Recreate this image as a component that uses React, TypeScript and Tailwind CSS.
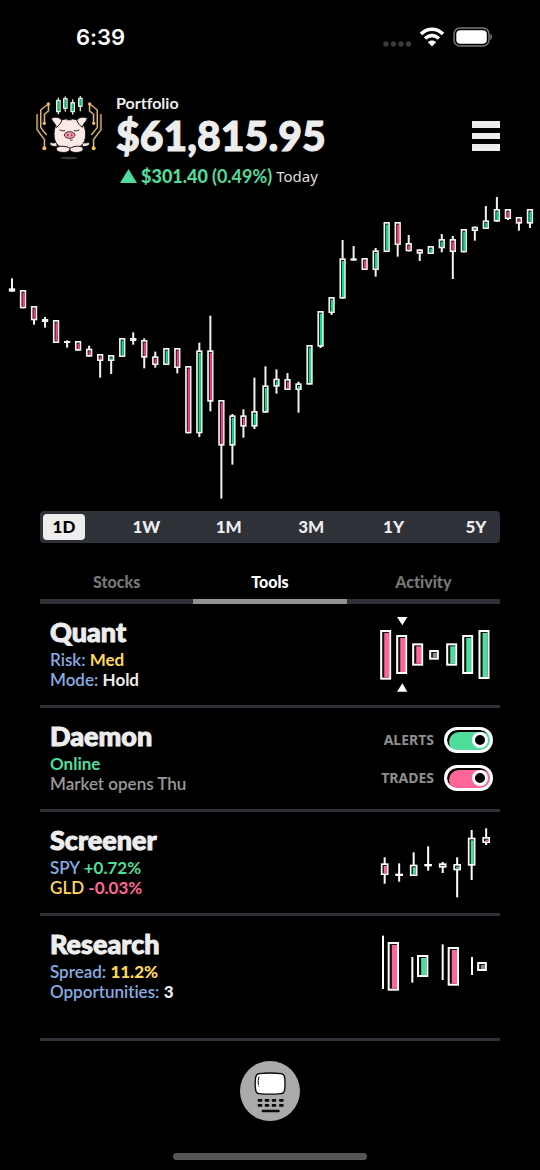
import { useState } from "react";
import clsx from "clsx";

type Tone = "up" | "down" | "flat";
// high, body top, body bottom, low, tone
type CandleData = [number, number, number, number, Tone];

const fills = {
  up: "#00e387",
  down: "#ff3b78",
  flat: "#d8d8d8",
};

const softFills = {
  up: "#50dc9a",
  down: "#ff6596",
  flat: "#8f8f8f",
};

const dayCandles: CandleData[] = [
  [265, 295, 305, 305, "flat"],
  [300, 300, 355, 355, "down"],
  [348, 348, 391, 404, "down"],
  [381, 387, 396, 413, "flat"],
  [390, 390, 459, 459, "down"],
  [451, 453, 459, 473, "down"],
  [453, 453, 482, 482, "down"],
  [467, 476, 500, 500, "down"],
  [492, 492, 513, 563, "down"],
  [495, 495, 513, 552, "up"],
  [444, 444, 501, 501, "up"],
  [427, 444, 453, 464, "flat"],
  [445, 450, 503, 535, "down"],
  [485, 499, 525, 533, "down"],
  [474, 474, 525, 525, "up"],
  [474, 474, 534, 550, "down"],
  [528, 528, 730, 730, "down"],
  [458, 481, 730, 741, "up"],
  [377, 481, 635, 664, "down"],
  [630, 630, 767, 926, "down"],
  [672, 676, 767, 824, "up"],
  [658, 676, 710, 743, "down"],
  [563, 663, 710, 717, "up"],
  [529, 586, 668, 668, "up"],
  [538, 566, 590, 611, "up"],
  [549, 567, 600, 600, "down"],
  [575, 580, 600, 668, "up"],
  [465, 465, 584, 584, "up"],
  [363, 363, 470, 474, "up"],
  [321, 321, 369, 375, "up"],
  [150, 205, 326, 326, "up"],
  [168, 205, 212, 212, "down"],
  [204, 204, 240, 240, "down"],
  [174, 181, 240, 260, "up"],
  [96, 96, 186, 186, "up"],
  [96, 96, 165, 200, "down"],
  [135, 159, 184, 184, "down"],
  [178, 178, 191, 213, "down"],
  [168, 168, 192, 192, "up"],
  [132, 147, 175, 187, "up"],
  [138, 147, 186, 267, "down"],
  [117, 117, 187, 187, "up"],
  [110, 110, 123, 152, "up"],
  [48, 91, 117, 117, "up"],
  [21, 57, 95, 95, "up"],
  [57, 57, 87, 90, "down"],
  [81, 81, 101, 122, "down"],
  [57, 57, 101, 114, "up"],
];

const screenerCandles: CandleData[] = [
  [127, 145, 180, 206, "down"],
  [145, 176, 183, 200, "down"],
  [112, 149, 183, 183, "up"],
  [94, 147, 154, 167, "flat"],
  [141, 145, 158, 174, "flat"],
  [127, 147, 166, 247, "up"],
  [45, 68, 152, 195, "up"],
  [40, 66, 84, 90, "down"],
];

interface BarProps {
  x: number;
  top: number;
  bottom: number;
  width: number;
  stroke: number;
  fill: string;
  line?: string;
}

function Bar({ x, top, bottom, width, stroke, fill, line = "#fff" }: BarProps) {
  const inner = width - stroke * 2;
  const innerHeight = Math.max(bottom - top - stroke * 2, 0);
  const shade = inner * 0.3;
  return (
    <g>
      <rect x={x - width / 2} y={top} width={width} height={bottom - top} fill={line} />
      <rect x={x - inner / 2} y={top + stroke} width={inner} height={innerHeight} fill="#111" />
      <rect
        x={x - inner / 2 + shade}
        y={top + stroke + Math.min(3, innerHeight / 3)}
        width={inner - shade}
        height={Math.max(innerHeight - Math.min(3, innerHeight / 3), 0)}
        fill={fill}
      />
    </g>
  );
}

function PortfolioChart() {
  return (
    <svg viewBox="0 0 1620 930" className="block w-full" role="img" aria-label="Portfolio chart">
      {dayCandles.map(([high, top, bottom, low, tone], i) => {
        const x = 36 + i * 33.06;
        return (
          <g key={i}>
            <rect x={x - 3} y={high} width={6} height={low - high} fill="#f2f2f2" />
            <Bar x={x} top={top} bottom={bottom} width={19} stroke={5} fill={fills[tone]} line="#f2f2f2" />
          </g>
        );
      })}
    </svg>
  );
}

function QuantChart() {
  const bars: [number, number, number, Tone][] = [
    [77, 75, 224, "down"],
    [125, 90, 207, "down"],
    [173, 115, 182, "down"],
    [222, 135, 164, "flat"],
    [275, 115, 182, "up"],
    [323, 90, 207, "up"],
    [372, 75, 222, "up"],
  ];
  return (
    <svg viewBox="45 21 360 252" width="120" height="84" aria-hidden="true">
      <path d="M111 36H142L127 61Z M111 260H142L127 235Z" fill="#fff" />
      {bars.map(([x, top, bottom, tone]) => (
        <Bar
          key={x}
          x={x}
          top={top}
          bottom={bottom}
          width={tone === "flat" ? 29 : 33}
          stroke={6}
          fill={softFills[tone]}
        />
      ))}
    </svg>
  );
}

function ScreenerChart() {
  return (
    <svg viewBox="45 30 360 228" width="120" height="76" aria-hidden="true">
      {screenerCandles.map(([high, top, bottom, low, tone], i) => {
        const x = 74 + i * 43.5;
        return (
          <g key={i}>
            <rect x={x - 3} y={high} width={6} height={low - high} fill="#fff" />
            <Bar x={x} top={top} bottom={bottom} width={23} stroke={5} fill={softFills[tone]} />
          </g>
        );
      })}
    </svg>
  );
}

function ResearchChart() {
  const pairs: [number, number, number, number, number, number, Tone][] = [
    [69, 362, 522, 100, 381, 527, "down"],
    [157, 426, 503, 188, 420, 486, "up"],
    [248, 388, 495, 280, 396, 512, "down"],
    [336, 426, 480, 366, 441, 468, "flat"],
  ];
  return (
    <svg viewBox="45 351 360 186" width="120" height="62" aria-hidden="true">
      {pairs.map(([lineX, high, low, x, top, bottom, tone]) => (
        <g key={lineX}>
          <rect x={lineX - 3} y={high} width={6} height={low - high} fill="#fff" />
          <Bar
            x={x}
            top={top}
            bottom={bottom}
            width={tone === "flat" ? 29 : 34}
            stroke={6}
            fill={softFills[tone]}
          />
        </g>
      ))}
    </svg>
  );
}

function Circuit() {
  return (
    <g fill="none" strokeLinejoin="round">
      <path
        d="M88 59V80L77 89V112 M65 72V129L79 147 M54 88V134L76 162V190"
        stroke="#26306b"
        strokeWidth="3"
      />
      <path
        d="M85 57V78L73 88V114 M85 57L73 66L62 75V128L80 150 M51 87V134L73 164V190"
        stroke="#e3b75b"
        strokeWidth="4"
      />
      <g fill="#f0c060">
        <circle cx="85" cy="57" r="5" />
        <circle cx="73" cy="115" r="5" />
        <circle cx="73" cy="190" r="6" />
      </g>
    </g>
  );
}

function PigLogo() {
  return (
    <svg viewBox="45 27 204 204" width="68" height="68" role="img" aria-label="Pig logo">
      <Circuit />
      <g transform="translate(294 0) scale(-1 1)">
        <Circuit />
      </g>
      {[
        [115, 38, 44, 82, 88],
        [136, 34, 39, 72, 80],
        [158, 43, 51, 82, 89],
        [181, 33, 38, 66, 79],
      ].map(([x, high, top, bottom, low]) => (
        <g key={x}>
          <rect x={x - 2} y={high} width={4} height={low - high} fill="#ddd" />
          <rect x={x - 7} y={top} width={14} height={bottom - top} rx={2} fill="#e6f5ec" />
          <rect x={x - 3} y={top + 4} width={7} height={bottom - top - 8} fill="#12b573" />
        </g>
      ))}
      <g fill="#fde8e8" stroke="#151515" strokeWidth="3" strokeLinejoin="round">
        <path d="M110 170C100 178 94 170 90 174C87 180 96 186 112 184Z" />
        <path d="M188 170C198 178 204 170 208 174C211 180 202 186 186 184Z" />
        <path d="M147 101C117 101 102 119 102 147C102 178 119 192 149 192C181 192 197 177 197 147C197 119 181 101 147 101Z" />
        <path d="M94 100C105 93 121 97 125 106C123 115 118 120 109 127C107 115 98 113 94 100Z" />
        <path d="M202 100C191 93 175 97 171 106C173 115 178 120 187 127C189 115 198 113 202 100Z" />
        <path d="M110 188C117 181 140 183 151 190C149 203 132 204 119 201C112 199 107 194 110 188Z" />
        <path d="M188 188C180 181 162 183 149 190C148 203 168 204 179 201C187 199 192 194 188 188Z" />
      </g>
      <rect x="140" y="101" width="15" height="5" rx="2" fill="#111" />
      <path
        d="M120 135Q127 140 134 137 M163 137Q170 140 177 135 M151 165Q154 167 157 165"
        fill="none"
        stroke="#33272b"
        strokeWidth="3"
        strokeLinecap="round"
      />
      <ellipse cx="149" cy="150" rx="16" ry="10" fill="#f797ad" stroke="#492832" strokeWidth="3" />
      <ellipse cx="143" cy="150" rx="2.5" ry="4" fill="#963e5a" />
      <ellipse cx="155" cy="150" rx="2.5" ry="4" fill="#963e5a" />
      <ellipse cx="147" cy="219" rx="26" ry="4" fill="#30343a" />
    </svg>
  );
}

function StatusBar() {
  return (
    <div className="flex h-[74px] items-center justify-between pr-12 pl-[76px]">
      <span className="font-['Inter',sans-serif] text-[22px] font-semibold text-white">6:39</span>
      <svg width="110" height="24" viewBox="382 24 110 24" aria-hidden="true">
        <g fill="#3c3c3c">
          <circle cx="386" cy="43" r="2.7" />
          <circle cx="393.5" cy="43" r="2.7" />
          <circle cx="401" cy="43" r="2.7" />
          <circle cx="408.5" cy="43" r="2.7" />
        </g>
        <g fill="none" stroke="#fff" strokeWidth="3.5">
          <path d="M421 33C427.5 26.5 436.5 26.5 443 33" />
          <path d="M425 37.5C429.5 33.5 434.5 33.5 439 37.5" />
        </g>
        <path d="M432 45.5L427.7 41.1C430.2 38.9 433.8 38.9 436.3 41.1Z" fill="#fff" />
        <rect x="454" y="27" width="35" height="18" rx="6" fill="none" stroke="#777" strokeWidth="1.5" />
        <rect x="456.3" y="29.3" width="30.5" height="13.5" rx="4" fill="#fff" />
        <path d="M490.3 33C492.6 34 492.6 38 490.3 39Z" fill="#777" />
      </svg>
    </div>
  );
}

interface ToggleProps {
  id: string;
  label: string;
  color: string;
}

function Toggle({ id, label, color }: ToggleProps) {
  return (
    <div className="flex items-center justify-end gap-[10px]">
      <label htmlFor={id} className="font-['Noto_Sans',sans-serif] text-[14px] leading-5 font-bold text-[#8e8e8e]">
        {label}
      </label>
      <input
        id={id}
        type="checkbox"
        defaultChecked
        className={clsx(
          "flex h-[26px] w-[49px] cursor-pointer appearance-none items-center rounded-full border-3 border-white px-[2px] shadow-[inset_2px_2px_0_#000] after:size-4 after:rounded-full after:border-3 after:border-white after:bg-black checked:justify-end",
          color
        )}
      />
    </div>
  );
}

interface ToolRowProps {
  title: string;
  children: React.ReactNode;
  aside: React.ReactNode;
  last?: boolean;
}

function ToolRow({ title, children, aside, last }: ToolRowProps) {
  return (
    <section
      className={clsx(
        "flex items-start justify-between border-b-3 border-[#2e3138] pr-[5px] pl-[10px]",
        last ? "h-[125px]" : "h-[104px]"
      )}
    >
      <div className="pt-[14px] text-[17px] leading-5 font-semibold">
        <h2 className="mb-1 text-[27px] leading-7 font-black text-[#ededed] [-webkit-text-stroke:1px_currentColor]">
          {title}
        </h2>
        {children}
      </div>
      {aside}
    </section>
  );
}

const ranges = ["1D", "1W", "1M", "3M", "1Y", "5Y"];
const tabs = ["Stocks", "Tools", "Activity"];

export default function App() {
  const [range, setRange] = useState("1D");
  const [tab, setTab] = useState("Tools");

  return (
    <div className="min-h-screen bg-black font-['Lato',sans-serif] text-[#ededed] [font-variant-ligatures:none]">
      <StatusBar />
      <header className="flex h-[116px] items-start pt-5 pr-10 pl-[35px]">
        <PigLogo />
        <div className="ml-[13px] flex-1">
          <p className="text-[16px] leading-[18px] font-bold">Portfolio</p>
          <h1 className="text-[41px] leading-12 font-black [-webkit-text-stroke:1px_currentColor]">$61,815.95</h1>
          <p className="flex items-center gap-1 pl-1 text-[18px] leading-8 text-[#50dc9a]">
            <svg width="17" height="14" viewBox="0 0 17 14" aria-hidden="true">
              <path d="M8.5 0L17 14H0Z" fill="#50dc9a" />
            </svg>
            <span className="font-black">$301.40</span>
            <span className="font-bold">(0.49%)</span>
            <span className="font-['Noto_Sans',sans-serif] text-[15px] text-[#dedede]">Today</span>
          </p>
        </div>
        <button aria-label="Menu" className="mt-[27px] cursor-pointer">
          <svg width="28" height="30" viewBox="0 0 28 30" className="block">
            <path d="M0 0H28V7H0Z M0 12H28V18H0Z M0 23H28V30H0Z" fill="#ededed" />
          </svg>
        </button>
      </header>

      <PortfolioChart />

      <main className="mx-10">
        <div className="mt-[11px] flex justify-between rounded bg-[#2e3138] p-[3px]">
          {ranges.map((item) => (
            <button
              key={item}
              onClick={() => setRange(item)}
              className={clsx(
                "h-[26px] w-[42px] cursor-pointer rounded text-[17px] leading-[26px] font-black",
                item === range ? "bg-[#ededed] text-black" : "text-[#ededed]"
              )}
            >
              {item}
            </button>
          ))}
        </div>

        <nav className="mt-[27px] grid grid-cols-3">
          {tabs.map((item) => (
            <button
              key={item}
              onClick={() => setTab(item)}
              className={clsx(
                "cursor-pointer border-b-5 pb-[5px] text-[16px] leading-6 font-black",
                item === tab ? "border-[#929292] text-white" : "border-[#2e3138] text-[#777]"
              )}
            >
              {item}
            </button>
          ))}
        </nav>

        <ToolRow title="Quant" aside={<div className="pt-2"><QuantChart /></div>}>
          <p className="text-[#86ace0]">
            Risk: <span className="font-bold text-[#ffd65c]">Med</span>
          </p>
          <p className="text-[#86ace0]">
            Mode: <span className="font-bold text-[#ededed]">Hold</span>
          </p>
        </ToolRow>

        <ToolRow
          title="Daemon"
          aside={
            <div className="flex flex-col gap-3 pt-[19px] pr-[2px]">
              <Toggle id="alerts" label="ALERTS" color="bg-[#50dc9a]" />
              <Toggle id="trades" label="TRADES" color="bg-[#ff6596]" />
            </div>
          }
        >
          <p className="font-bold text-[#50dc9a]">Online</p>
          <p className="text-[#999]">Market opens Thu</p>
        </ToolRow>

        <ToolRow title="Screener" aside={<div className="pt-[13px]"><ScreenerChart /></div>}>
          <p className="text-[#86ace0]">
            SPY <span className="font-bold text-[#50dc9a]">+0.72%</span>
          </p>
          <p className="text-[#ffd65c]">
            GLD <span className="font-bold text-[#ff6596]">-0.03%</span>
          </p>
        </ToolRow>

        <ToolRow title="Research" last aside={<div className="pt-4"><ResearchChart /></div>}>
          <p className="text-[#86ace0]">
            Spread: <span className="font-black text-[#ffd65c]">11.2%</span>
          </p>
          <p className="text-[#86ace0]">
            Opportunities: <span className="font-black text-[#ededed]">3</span>
          </p>
        </ToolRow>
      </main>

      <footer className="flex flex-col items-center pt-5 pb-[10px]">
        <button aria-label="Terminal" className="cursor-pointer">
          <svg width="60" height="60" viewBox="0 0 180 180" className="block">
            <circle cx="90" cy="90" r="90" fill="#aaa" />
            <path
              d="M57 38Q90 34 123 38Q133 40 134 49Q136 68 134 86Q133 97 123 98Q90 101 57 98Q48 97 47 86Q44 68 47 49Q48 40 57 38Z"
              fill="#fff"
              stroke="#080808"
              strokeWidth="4"
            />
            <path d="M57 47Q53 56 55 72 M56 75V77" fill="none" stroke="#111" strokeWidth="3" />
            <g fill="#080808">
              {[53, 74, 95, 117].map((x) => (
                <g key={x}>
                  <rect x={x} y="114" width="14" height="8" rx="3" />
                  <rect x={x} y="129" width="14" height="8" rx="3" />
                </g>
              ))}
              <rect x="65" y="146" width="54" height="8" rx="3" />
            </g>
          </svg>
        </button>
        <div className="mt-8 h-[7px] w-[194px] rounded-full bg-[#555]" />
      </footer>
    </div>
  );
}
